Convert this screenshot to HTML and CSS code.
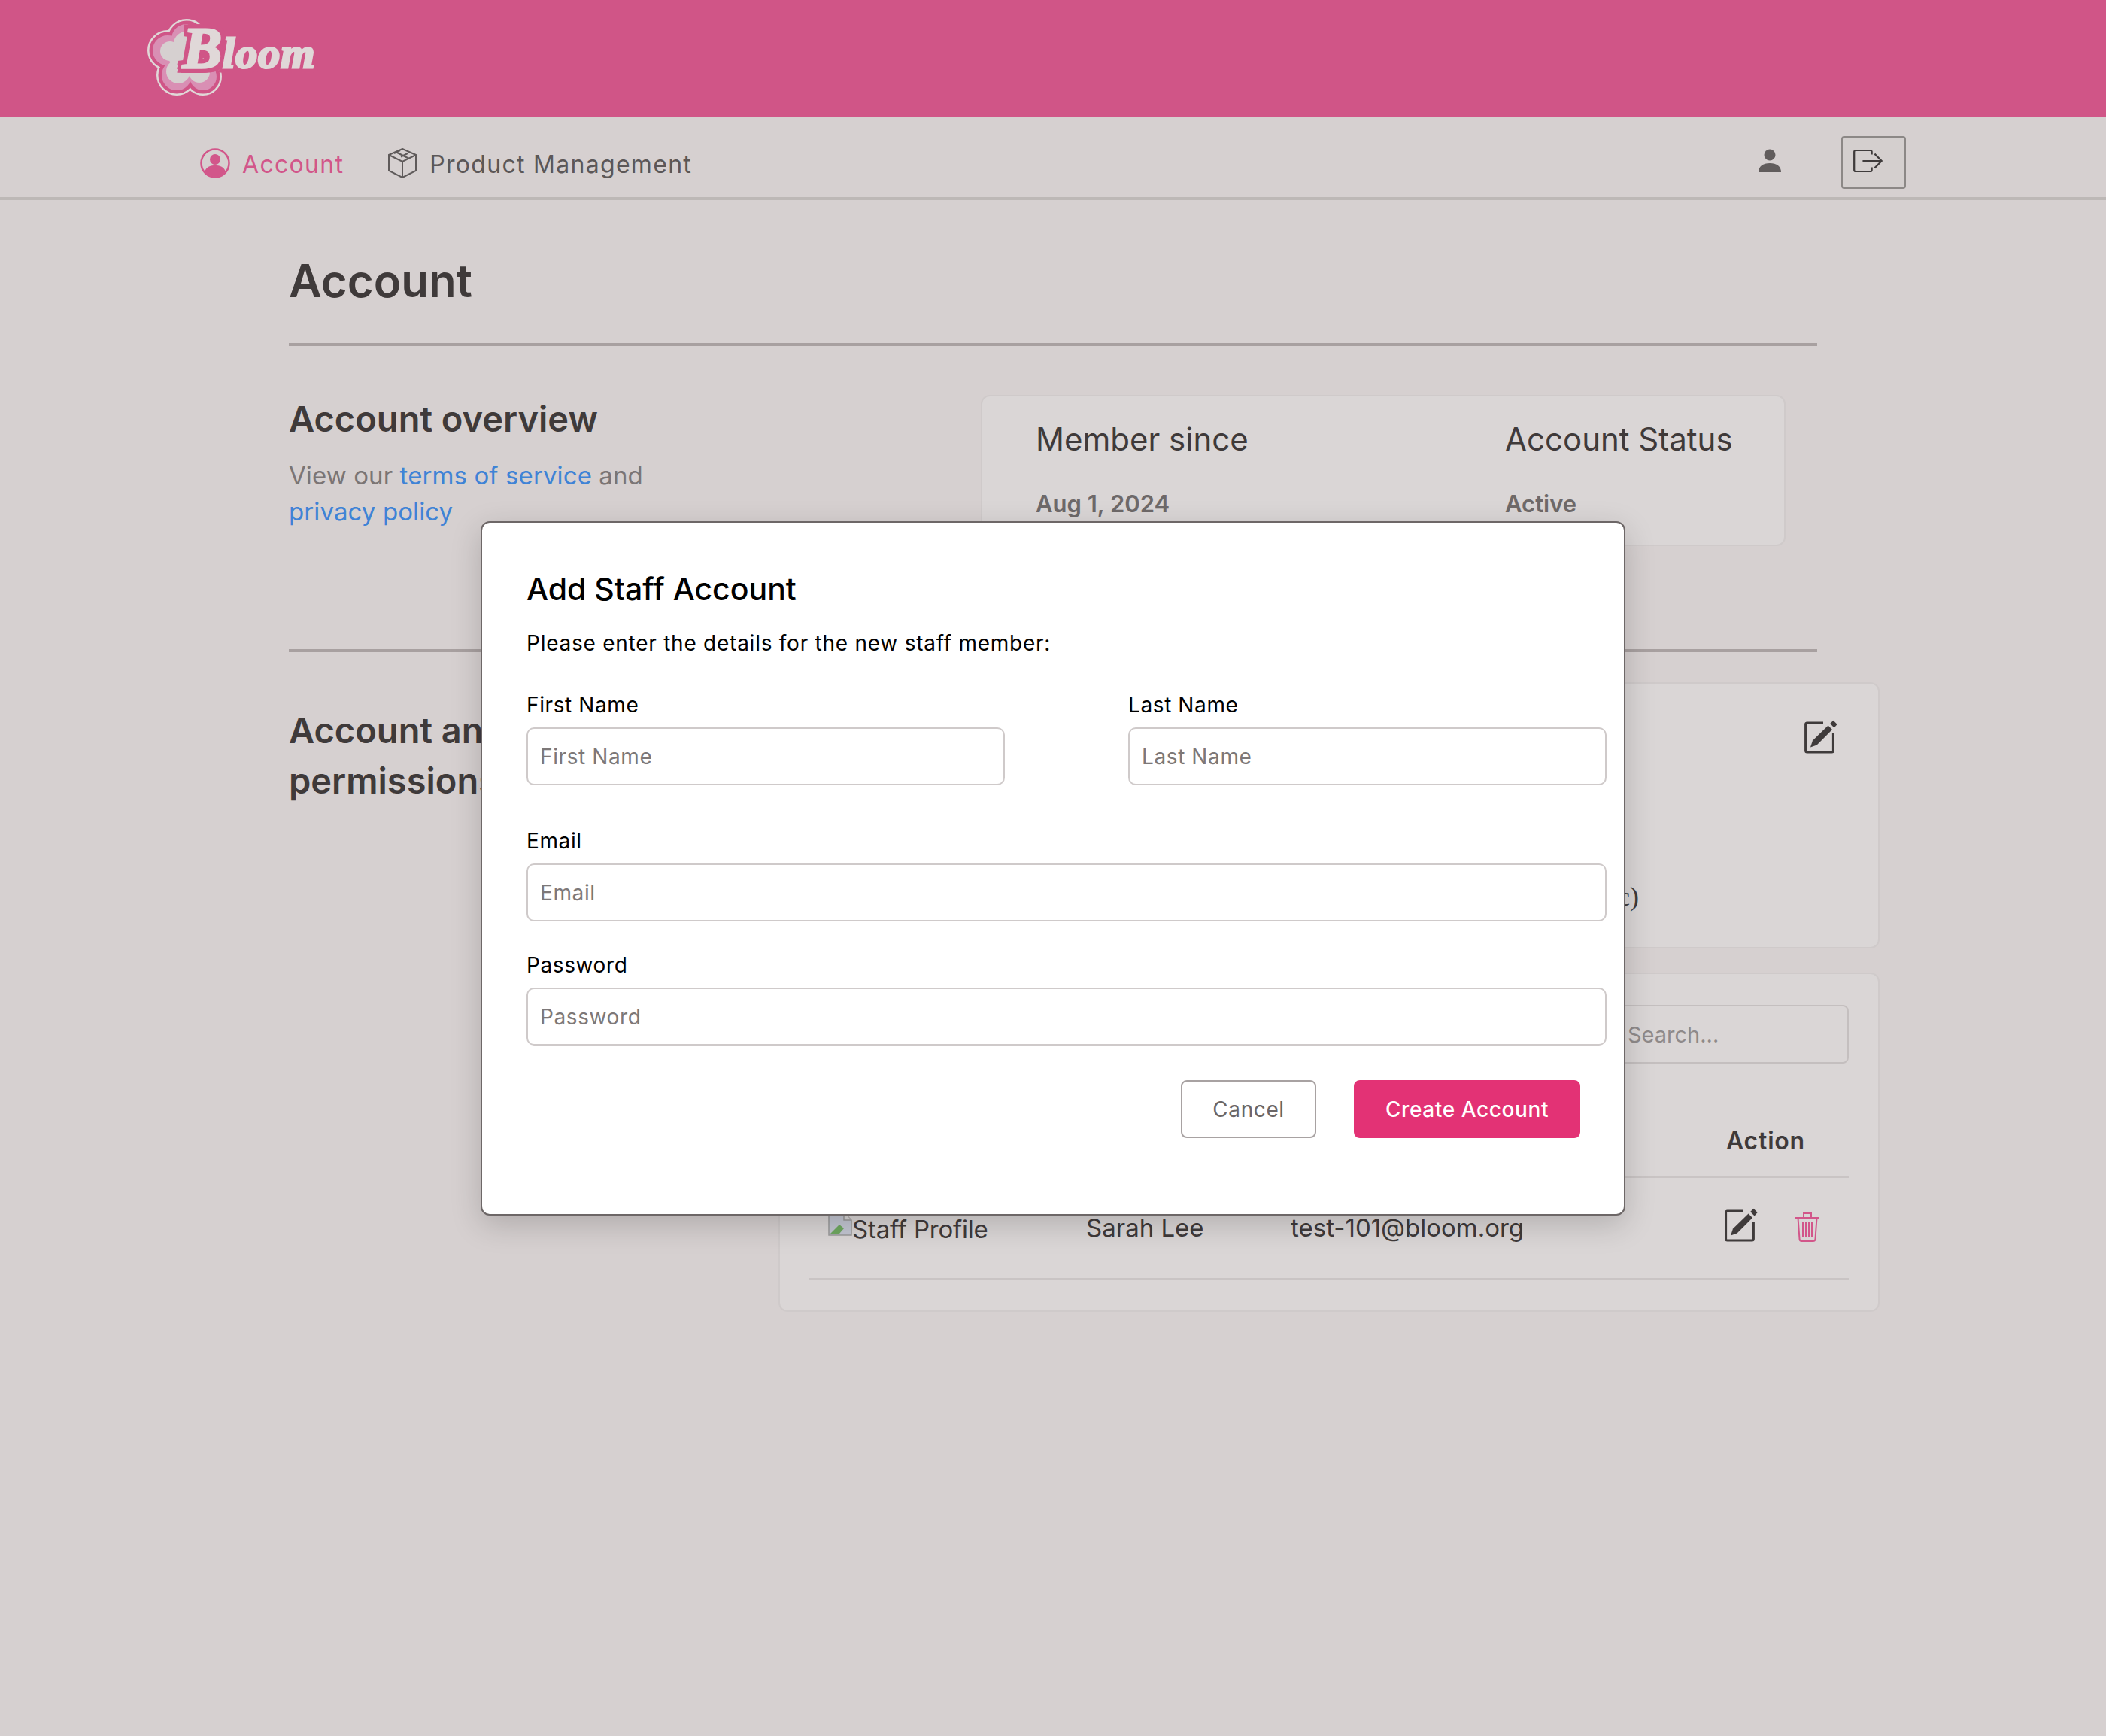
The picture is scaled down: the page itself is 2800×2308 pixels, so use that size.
FILE: index.html
```html
<!DOCTYPE html>
<html lang="en">
<head>
    <meta charset="UTF-8">
    <title>Account</title>
    <link rel="stylesheet" href="styles.css">
</head>
<body>
    <header class="topbar">
        <svg class="logo" width="225" height="105" viewBox="0 0 225 105">
            <defs>
                <g id="petals">
                    <circle cx="53" cy="27" r="11"/>
                    <circle cx="28" cy="42" r="11"/>
                    <circle cx="40" cy="75" r="11"/>
                    <circle cx="75" cy="77" r="9"/>
                    <circle cx="48" cy="52" r="10"/>
                </g>
            </defs>
            <use href="#petals" class="petal-line"/>
            <use href="#petals" class="petal-gap"/>
            <use href="#petals" class="petal-mid"/>
            <g class="petal-core">
                <circle cx="52" cy="33" r="16"/>
                <circle cx="31" cy="43" r="13"/>
                <circle cx="42" cy="70" r="16"/>
                <circle cx="70" cy="71" r="14"/>
                <circle cx="48" cy="52" r="18"/>
            </g>
            <text class="logo-word" x="48" y="65"><tspan class="logo-b">B</tspan>loom</text>
        </svg>
    </header>

    <nav class="navbar">
        <a class="tab tab-active">
            <svg width="40" height="40" viewBox="0 0 40 40">
                <circle cx="20" cy="20" r="18.5" fill="none" stroke="#d2568a" stroke-width="2.5"/>
                <circle cx="20" cy="15" r="7" fill="#d2568a"/>
                <path d="M6 31c3-7 8-8 14-8s11 1 14 8c-3.500 4-8.500 7-14 7s-10.500-3-14-7z" fill="#d2568a"/>
            </svg>
            <span>Account</span>
        </a>
        <a class="tab">
            <svg width="40" height="40" viewBox="0 0 40 40" fill="none" stroke="#5f5a5a" stroke-width="2">
                <path d="M20 1l18 8v21l-18 9-18-9V9z"/>
                <path d="M2 9l18 9 18-9M20 18v21M11 5l18 9M17 3l-8 4M27 7l-9 4.500"/>
            </svg>
            <span>Product Management</span>
        </a>
        <div class="nav-right">
            <svg class="user-icon" width="30" height="31" viewBox="0 0 30 31" fill="#615c5c">
                <circle cx="15" cy="8" r="7.500"/>
                <path d="M0 31c0-8 6-12 15-12s15 4 15 12z"/>
            </svg>
            <button class="logout-btn">
                <svg width="40" height="30" viewBox="0 0 42 32" fill="none" stroke="#3f3b3b" stroke-width="2.400">
                    <path d="M27 7V3a2 2 0 0 0-2-2H4a2 2 0 0 0-2 2v26a2 2 0 0 0 2 2h21a2 2 0 0 0 2-2v-4"/>
                    <path d="M14 16h26M31 6l10 10-10 10"/>
                </svg>
            </button>
        </div>
    </nav>

    <main class="page">
        <h1 class="page-title">Account</h1>

        <section class="overview">
            <div>
                <h2 class="section-title overview-title">Account overview</h2>
                <p class="terms">View our <a>terms of service</a> and<br><a>privacy policy</a></p>
            </div>
            <div class="card member-card">
                <div class="member-col">
                    <h3>Member since</h3>
                    <p>Aug 1, 2024</p>
                </div>
                <div class="status-col">
                    <h3>Account Status</h3>
                    <p>Active</p>
                </div>
            </div>
        </section>

        <section class="permissions">
            <h2 class="section-title perm-title">Account and<br>permissions</h2>
            <div class="perm-cards">
                <div class="card info-card">
                    <div class="edit-row">
                        <svg class="edit-icon" width="48" height="46" viewBox="0 0 24 23">
                            <path class="edit-frame" d="M13 2.500H2.300a1 1 0 0 0-1 1v17.500a1 1 0 0 0 1 1H18.700a1 1 0 0 0 1-1V9.500"/>
                            <path d="M4.500 18.800L6 14.300 16.300 4.300 19 7 8.800 17.200z"/>
                            <path d="M17.600 3L19.700.9 22.300 3.500 20.300 5.700z"/>
                        </svg>
                    </div>
                    <p class="info-line">Role: Admin (Public)</p>
                </div>
                <div class="card staff-card">
                    <div class="search-row">
                        <input class="search" type="text" placeholder="Search...">
                    </div>
                    <table class="staff-table">
                        <thead>
                            <tr>
                                <th class="col-photo">Profile</th>
                                <th class="col-name">Name</th>
                                <th class="col-email">Email</th>
                                <th>Action</th>
                            </tr>
                        </thead>
                        <tbody>
                            <tr>
                                <td>
                                    <span class="broken-img">
                                        <svg width="32" height="32" viewBox="0 0 32 32">
                                            <path d="M1 1h20l10 10v20H1z" fill="#c3c6d2" stroke="#9b9a9a" stroke-width="1.500"/>
                                            <path d="M3 29l12-12 6 5-6 7z" fill="#6fa860"/>
                                            <path d="M21 1v10h10" fill="#d8d6d6" stroke="#9b9a9a" stroke-width="1.500"/>
                                        </svg>Staff Profile
                                    </span>
                                </td>
                                <td>Sarah Lee</td>
                                <td>test-101@bloom.org</td>
                                <td>
                                    <span class="row-actions">
                                        <svg class="edit-icon" width="48" height="46" viewBox="0 0 24 23">
                                            <path class="edit-frame" d="M13 2.500H2.300a1 1 0 0 0-1 1v17.500a1 1 0 0 0 1 1H18.700a1 1 0 0 0 1-1V9.500"/>
                                            <path d="M4.500 18.800L6 14.300 16.300 4.300 19 7 8.800 17.200z"/>
                                            <path d="M17.600 3L19.700.9 22.300 3.500 20.300 5.700z"/>
                                        </svg>
                                        <svg class="trash-icon" width="34" height="40" viewBox="0 0 34 40">
                                            <path d="M1 8h32M12 7V2h10v5M4.500 8l2 28a3 3 0 0 0 3 3h15a3 3 0 0 0 3-3l2-28M11 14v19M15 14v19M19 14v19M23 14v19"/>
                                        </svg>
                                    </span>
                                </td>
                            </tr>
                        </tbody>
                    </table>
                </div>
            </div>
        </section>
    </main>

    <div class="modal">
        <h2 class="modal-title">Add Staff Account</h2>
        <p class="modal-intro">Please enter the details for the new staff member:</p>
        <form class="modal-form">
            <div class="name-row">
                <div class="field">
                    <label for="first">First Name</label>
                    <input id="first" type="text" placeholder="First Name">
                </div>
                <div class="field">
                    <label for="last">Last Name</label>
                    <input id="last" type="text" placeholder="Last Name">
                </div>
            </div>
            <div class="field">
                <label for="email">Email</label>
                <input id="email" type="text" placeholder="Email">
            </div>
            <div class="field">
                <label for="password">Password</label>
                <input id="password" type="text" placeholder="Password">
            </div>
            <div class="modal-buttons">
                <button type="button" class="btn-cancel">Cancel</button>
                <button type="button" class="btn-create">Create Account</button>
            </div>
        </form>
    </div>
</body>
</html>
```

FILE: styles.css
```css
* {
    box-sizing: border-box;
}
body {
    margin: 0;
    min-height: 2308px;
    background-color: #d6d0d0;
    font-family: Inter, "Open Sans", sans-serif;
    color: #3f3a3a;
    position: relative;
}

/* top bar and logo */
.topbar {
    height: 155px;
    background-color: #d05587;
    padding: 25px 0 0 195px;
}
.logo {
    display: block;
    overflow: visible;
}
.petal-line { fill: #e0d8d8; stroke: #e0d8d8; stroke-width: 32px; }
.petal-gap { fill: #d05587; stroke: #d05587; stroke-width: 27px; }
.petal-mid { fill: #d98fb4; stroke: #d98fb4; stroke-width: 18px; }
.petal-core { fill: #d6d0d0; }
.logo-word {
    font-family: "Liberation Serif", serif;
    font-weight: bold;
    font-style: italic;
    font-size: 58px;
    letter-spacing: 1px;
    fill: #e0d8d8;
    stroke: #e0d8d8;
    stroke-width: 3px;
    filter: drop-shadow(5px 0 0 #d05587) drop-shadow(-5px 0 0 #d05587) drop-shadow(0 5px 0 #d05587) drop-shadow(0 -5px 0 #d05587);
}
.logo-b {
    font-size: 78px;
}

/* nav */
.navbar {
    height: 111px;
    border-bottom: 4px solid #bdb8b6;
    padding: 26px 266px 0 266px;
    display: flex;
    align-items: flex-start;
}
.tab {
    display: flex;
    align-items: center;
    gap: 16px;
    margin: 13px 58px 0 0;
    font-size: 32px;
    letter-spacing: 1.300px;
    line-height: 40px;
    color: #5c5757;
}
.tab span {
    margin-top: 5px;
}
.tab-active {
    color: #d2568a;
}
.nav-right {
    margin-left: auto;
    display: flex;
    align-items: flex-start;
    gap: 80px;
}
.user-icon {
    margin-top: 17px;
}
.logout-btn {
    width: 86px;
    height: 70px;
    border: 2px solid #8c8886;
    border-radius: 4px;
    background-color: #d4cfce;
    padding: 0 0 4px 13px;
    display: flex;
    align-items: center;
    justify-content: flex-start;
}

/* page */
.page {
    width: 2032px;
    margin-left: 384px;
}
.page-title {
    margin: 68px 0 0;
    padding-bottom: 44px;
    border-bottom: 4px solid #a8a0a0;
    font-size: 60px;
    line-height: 78px;
    font-weight: 600;
}
.overview {
    height: 407px;
    padding-top: 65px;
    border-bottom: 4px solid #a8a0a0;
    display: grid;
    grid-template-columns: 920px 1070px;
}
.section-title {
    margin: 0;
    font-size: 47px;
    line-height: 67px;
    font-weight: 600;
}
.overview-title {
    margin-top: -2px;
}
.terms {
    margin: 18px 0 0;
    font-size: 33px;
    letter-spacing: 0.100px;
    line-height: 48px;
    color: #7b7575;
}
.terms a {
    color: #3f83d6;
}
.card {
    background-color: #dad6d6;
    border: 2px solid #cfcaca;
    border-radius: 12px;
}
.member-card {
    height: 201px;
    padding: 32px 0 0 71px;
    display: flex;
}
.member-col {
    width: 624px;
}
.member-card h3 {
    margin: 0;
    font-size: 42px;
    line-height: 50px;
    font-weight: 400;
}
.member-card p {
    margin: 41px 0 0;
    font-size: 31px;
    line-height: 40px;
    font-weight: 600;
    color: #6e6969;
}
.permissions {
    display: grid;
    grid-template-columns: 651px 1464px;
}
.perm-title {
    margin-top: 70px;
}
.perm-cards {
    padding-top: 40px;
    display: flex;
    flex-direction: column;
    gap: 32px;
}
.info-card {
    height: 354px;
    padding: 47px 51px 0 0;
}
.edit-row {
    display: flex;
    justify-content: flex-end;
}
.edit-icon {
    fill: #3f3b3b;
    display: block;
}
.edit-frame {
    fill: none;
    stroke: #3f3b3b;
    stroke-width: 1.500px;
}
.info-line {
    margin: 168px 267px 0 0;
    text-align: right;
    font-family: "Liberation Serif", serif;
    font-size: 36px;
    line-height: 44px;
}
.staff-card {
    height: 451px;
    padding: 41px 39px 0 39px;
}
.search-row {
    display: flex;
    justify-content: flex-end;
}
.search {
    width: 314px;
    height: 78px;
    border: 2px solid #c4bfbf;
    border-radius: 8px;
    background-color: transparent;
    font-family: inherit;
    font-size: 29px;
    padding: 0 18px;
}
.search::placeholder {
    color: #8f8a8a;
}
.staff-table {
    margin-top: 54px;
    width: 100%;
    border-collapse: collapse;
    table-layout: fixed;
    font-size: 33px;
}
.staff-table th {
    height: 96px;
    text-align: left;
    padding: 3px 0 0 25px;
    font-size: 32px;
    letter-spacing: 0.800px;
    font-weight: 600;
    border-bottom: 3px solid #c9c4c4;
}
.staff-table td {
    height: 136px;
    padding: 0 0 0 25px;
    border-bottom: 3px solid #c9c4c4;
    color: #3f3a3a;
}
.col-photo { width: 343px; }
.col-name { width: 272px; }
.col-email { width: 579px; }
.broken-img {
    display: inline-flex;
    align-items: center;
    white-space: nowrap;
    letter-spacing: -0.200px;
}
.broken-img svg {
    margin-top: -14px;
}
.row-actions {
    display: flex;
    align-items: center;
    gap: 46px;
    margin: -3px 0 0 -3px;
}
.row-actions .edit-icon {
    margin-top: -6px;
}
.trash-icon {
    fill: none;
    stroke: #d2568a;
    stroke-width: 2;
}

/* modal */
.modal {
    position: absolute;
    left: 639px;
    top: 693px;
    width: 1522px;
    height: 923px;
    padding: 0 23px 0 59px;
    background-color: #fff;
    border: 2px solid #6d6767;
    border-radius: 12px;
    box-shadow: 0 12px 40px rgba(0, 0, 0, 0.18);
    color: #000;
}
.modal-title {
    margin: 60px 0 0;
    font-size: 41px;
    line-height: 56px;
    font-weight: 500;
}
.modal-intro {
    margin: 24px 0 0;
    font-size: 28px;
    letter-spacing: 0.750px;
    line-height: 40px;
}
.modal-form {
    margin-top: 42px;
}
.name-row {
    display: grid;
    grid-template-columns: 636px 636px;
    column-gap: 164px;
}
.field {
    margin-bottom: 38px;
}
.name-row .field {
    margin-bottom: 54px;
}
.field label {
    display: block;
    font-size: 28px;
    letter-spacing: 0.600px;
    line-height: 40px;
    margin-bottom: 10px;
}
.field input {
    display: block;
    width: 100%;
    height: 77px;
    border: 2px solid #cfcaca;
    border-radius: 10px;
    font-family: inherit;
    font-size: 28px;
    letter-spacing: 0.600px;
    padding: 0 16px;
}
.field input::placeholder {
    color: #7d7878;
}
.modal-buttons {
    margin-top: 46px;
    padding-right: 35px;
    display: flex;
    justify-content: flex-end;
    gap: 50px;
}
.modal-buttons button {
    height: 77px;
    border-radius: 8px;
    font-family: inherit;
    font-size: 28px;
    letter-spacing: 0.600px;
}
.btn-cancel {
    width: 180px;
    background-color: #fff;
    border: 2px solid #a8a2a2;
    color: #6b6666;
}
.btn-create {
    width: 301px;
    background-color: #e33275;
    border: none;
    color: #fff;
    font-weight: 500;
}
```
